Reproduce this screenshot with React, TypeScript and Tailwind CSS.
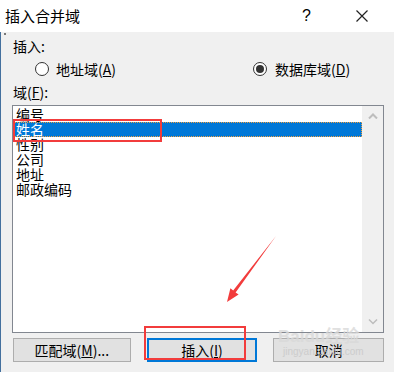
import React from "react";

const CJK = { fontFamily: '"SimSun","Noto Sans CJK SC","Liberation Sans",sans-serif' };

function Radio({ checked }: { checked?: boolean }) {
  return (
    <span className="w-[14px] h-[14px] rounded-full border border-[#333] bg-white flex items-center justify-center shrink-0">
      {checked && <span className="w-[8px] h-[8px] rounded-full bg-[#333]" />}
    </span>
  );
}

export default function App() {
  const items = ["编号", "姓名", "性别", "公司", "地址", "邮政编码"];
  return (
    <div className="relative w-[394px] h-[372px] overflow-hidden text-[#000]" style={CJK}>
      {/* title bar */}
      <div className="h-[32px] bg-white flex items-center pl-[5px]">
        <span className="text-[15px] leading-[16px] flex-1">插入合并域</span>
        <span className="text-[16px] leading-[16px] w-[8px] mr-[46px] font-['Liberation_Sans']">?</span>
        <svg width="12" height="12" viewBox="0 0 12 12" className="mr-[26px]">
          <path d="M0.5 0.5 L11.5 11.5 M11.5 0.5 L0.5 11.5" stroke="#222" strokeWidth="1.2" />
        </svg>
      </div>
      {/* body */}
      <div className="relative h-[340px] bg-[#f0f0f0] border-l border-[#44709e] flex flex-col pl-[11px] pr-[10px] pt-[6px] text-[14px]">
        <span className="absolute left-[3px] top-[1px] w-[2px] h-[2px] bg-[#777]" />
        <div className="leading-[16px] pl-[1px]">插入:</div>
        <div className="flex items-center h-[16px] mt-[7px]">
          <div className="flex items-center ml-[23px] w-[218px]">
            <Radio />
            <span className="ml-[7px] leading-[16px]">
              地址域(<span className="underline">A</span>)
            </span>
          </div>
          <div className="flex items-center">
            <Radio checked />
            <span className="ml-[8px] leading-[16px]">
              数据库域(<span className="underline">D</span>)
            </span>
          </div>
        </div>
        <div className="leading-[16px] mt-[7px] pl-[1px]">
          域(<span className="underline">F</span>):
        </div>
        <div className="mt-[5px] h-[228px] border border-[#828790] bg-white flex">
          <div className="flex-1 pt-[1px]">
            {items.map((t, i) => (
              <div
                key={t}
                className={
                  i === 1
                    ? "h-[15px] leading-[15px] pl-[3px] bg-[#0078d7] text-white outline outline-1 outline-dotted outline-[#f0a040] -outline-offset-1"
                    : "h-[15px] leading-[15px] pl-[3px]"
                }
              >
                {t}
              </div>
            ))}
          </div>
          <div className="w-[21px] bg-[#f0f0f0] flex flex-col items-center justify-between py-[7px]">
            <svg width="10" height="6" viewBox="0 0 10 6">
              <path d="M1 5.5 L5 1.5 L9 5.5" stroke="#bdbdbd" strokeWidth="2" fill="none" />
            </svg>
            <svg width="10" height="6" viewBox="0 0 10 6">
              <path d="M1 0.5 L5 4.5 L9 0.5" stroke="#bdbdbd" strokeWidth="1.5" fill="none" />
            </svg>
          </div>
        </div>
        <div className="flex mt-[5px] h-[24px] pl-[1px]">
          <div className="w-[118px] h-[24px] bg-[#e1e1e1] border border-[#adadad] flex items-center justify-center">
            匹配域(<span className="underline">M</span>)...
          </div>
          <div className="ml-[16px] w-[111px] h-[24px] bg-[#e1e1e1] border-2 border-[#0078d7] flex items-center justify-center">
            插入(<span className="underline">I</span>)
          </div>
          <div className="ml-[16px] w-[111px] h-[24px] bg-[#e1e1e1] border border-[#adadad] flex items-center justify-center">
            取消
          </div>
        </div>
      </div>

      {/* watermark */}
      <div className="absolute left-[278px] top-[326px] text-[#d9d9d9] text-[17px] leading-[18px] font-bold font-['Liberation_Sans'] opacity-80">
        Baidu<span style={CJK}>经验</span>
      </div>
      <div className="absolute left-[283px] top-[346px] text-[#c8c8c8] text-[10px] leading-[12px] font-['Liberation_Sans'] opacity-80">
        jingyan.baidu.com
      </div>

      {/* annotations */}
      <div className="absolute left-[13px] top-[119px] w-[149px] h-[23px] border-2 border-[#f23c3c]" />
      <div className="absolute left-[144px] top-[326px] w-[102px] h-[34px] border-2 border-[#f23c3c]" />
      <svg className="absolute left-0 top-0" width="394" height="372" viewBox="0 0 394 372">
        <polygon
          points="276,236 235.6,292.4 238.6,294.6 227,302 230.4,288.2 233.2,290.6"
          fill="#f23c3c"
        />
      </svg>
    </div>
  );
}
